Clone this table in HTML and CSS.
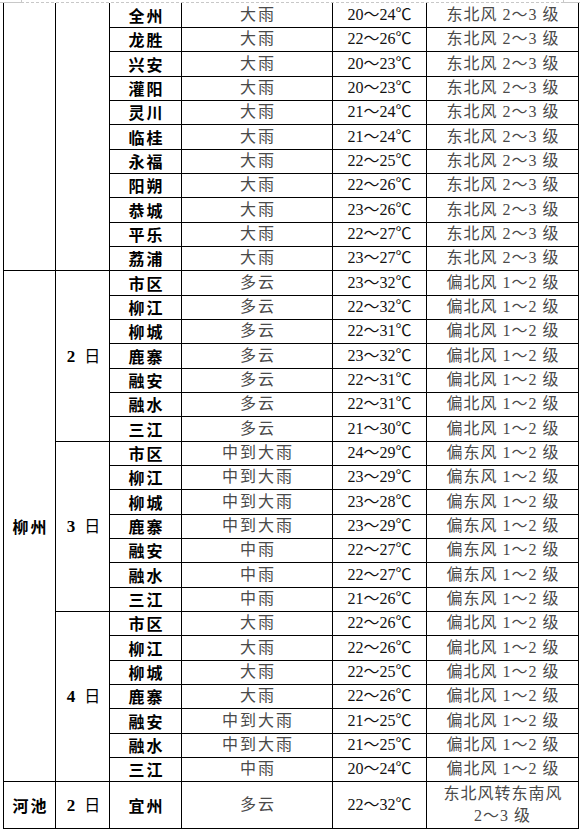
FILE: index.html
```html
<!DOCTYPE html>
<html lang="zh-CN">
<head>
<meta charset="utf-8">
<title>天气预报</title>
<link rel="stylesheet" href="styles.css">
</head>
<body>
<div class="cropline">
  <span class="seg-l"></span><span class="seg-m"></span><span class="seg-r"></span>
</div>
<table class="forecast">
  <colgroup>
    <col class="c-city"><col class="c-date"><col class="c-county"><col class="c-wx"><col class="c-temp"><col class="c-wind">
  </colgroup>
  <tbody>
    <tr class="first"><td class="city" rowspan="11"></td><td class="date" rowspan="11"></td><td class="county">全州</td><td class="wx">大雨</td><td class="temp">20～24℃</td><td class="wind">东北风 2～3 级</td></tr>
    <tr><td class="county">龙胜</td><td class="wx">大雨</td><td class="temp">22～26℃</td><td class="wind">东北风 2～3 级</td></tr>
    <tr><td class="county">兴安</td><td class="wx">大雨</td><td class="temp">20～23℃</td><td class="wind">东北风 2～3 级</td></tr>
    <tr><td class="county">灌阳</td><td class="wx">大雨</td><td class="temp">20～23℃</td><td class="wind">东北风 2～3 级</td></tr>
    <tr><td class="county">灵川</td><td class="wx">大雨</td><td class="temp">21～24℃</td><td class="wind">东北风 2～3 级</td></tr>
    <tr><td class="county">临桂</td><td class="wx">大雨</td><td class="temp">21～24℃</td><td class="wind">东北风 2～3 级</td></tr>
    <tr><td class="county">永福</td><td class="wx">大雨</td><td class="temp">22～25℃</td><td class="wind">东北风 2～3 级</td></tr>
    <tr><td class="county">阳朔</td><td class="wx">大雨</td><td class="temp">22～26℃</td><td class="wind">东北风 2～3 级</td></tr>
    <tr><td class="county">恭城</td><td class="wx">大雨</td><td class="temp">23～26℃</td><td class="wind">东北风 2～3 级</td></tr>
    <tr><td class="county">平乐</td><td class="wx">大雨</td><td class="temp">22～27℃</td><td class="wind">东北风 2～3 级</td></tr>
    <tr><td class="county">荔浦</td><td class="wx">大雨</td><td class="temp">23～27℃</td><td class="wind">东北风 2～3 级</td></tr>

    <tr><td class="city" rowspan="21">柳州</td><td class="date" rowspan="7"><b>2</b>日</td><td class="county">市区</td><td class="wx">多云</td><td class="temp">23～32℃</td><td class="wind">偏北风 1～2 级</td></tr>
    <tr><td class="county">柳江</td><td class="wx">多云</td><td class="temp">22～32℃</td><td class="wind">偏北风 1～2 级</td></tr>
    <tr><td class="county">柳城</td><td class="wx">多云</td><td class="temp">22～31℃</td><td class="wind">偏北风 1～2 级</td></tr>
    <tr><td class="county">鹿寨</td><td class="wx">多云</td><td class="temp">23～32℃</td><td class="wind">偏北风 1～2 级</td></tr>
    <tr><td class="county">融安</td><td class="wx">多云</td><td class="temp">22～31℃</td><td class="wind">偏北风 1～2 级</td></tr>
    <tr><td class="county">融水</td><td class="wx">多云</td><td class="temp">22～31℃</td><td class="wind">偏北风 1～2 级</td></tr>
    <tr><td class="county">三江</td><td class="wx">多云</td><td class="temp">21～30℃</td><td class="wind">偏北风 1～2 级</td></tr>

    <tr><td class="date" rowspan="7"><b>3</b>日</td><td class="county">市区</td><td class="wx">中到大雨</td><td class="temp">24～29℃</td><td class="wind">偏东风 1～2 级</td></tr>
    <tr><td class="county">柳江</td><td class="wx">中到大雨</td><td class="temp">23～29℃</td><td class="wind">偏东风 1～2 级</td></tr>
    <tr><td class="county">柳城</td><td class="wx">中到大雨</td><td class="temp">23～28℃</td><td class="wind">偏东风 1～2 级</td></tr>
    <tr><td class="county">鹿寨</td><td class="wx">中到大雨</td><td class="temp">23～29℃</td><td class="wind">偏东风 1～2 级</td></tr>
    <tr><td class="county">融安</td><td class="wx">中雨</td><td class="temp">22～27℃</td><td class="wind">偏东风 1～2 级</td></tr>
    <tr><td class="county">融水</td><td class="wx">中雨</td><td class="temp">22～27℃</td><td class="wind">偏东风 1～2 级</td></tr>
    <tr><td class="county">三江</td><td class="wx">中雨</td><td class="temp">21～26℃</td><td class="wind">偏东风 1～2 级</td></tr>

    <tr><td class="date" rowspan="7"><b>4</b>日</td><td class="county">市区</td><td class="wx">大雨</td><td class="temp">22～26℃</td><td class="wind">偏北风 1～2 级</td></tr>
    <tr><td class="county">柳江</td><td class="wx">大雨</td><td class="temp">22～26℃</td><td class="wind">偏北风 1～2 级</td></tr>
    <tr><td class="county">柳城</td><td class="wx">大雨</td><td class="temp">22～25℃</td><td class="wind">偏北风 1～2 级</td></tr>
    <tr><td class="county">鹿寨</td><td class="wx">大雨</td><td class="temp">22～26℃</td><td class="wind">偏北风 1～2 级</td></tr>
    <tr><td class="county">融安</td><td class="wx">中到大雨</td><td class="temp">21～25℃</td><td class="wind">偏北风 1～2 级</td></tr>
    <tr><td class="county">融水</td><td class="wx">中到大雨</td><td class="temp">21～25℃</td><td class="wind">偏北风 1～2 级</td></tr>
    <tr><td class="county">三江</td><td class="wx">中雨</td><td class="temp">20～24℃</td><td class="wind">偏北风 1～2 级</td></tr>

    <tr class="tall"><td class="city">河池</td><td class="date"><b>2</b>日</td><td class="county">宜州</td><td class="wx">多云</td><td class="temp">22～32℃</td><td class="wind">东北风转东南风<br>2～3 级</td></tr>
  </tbody>
</table>
</body>
</html>
```

FILE: styles.css
```css
html, body {
  margin: 0;
  padding: 0;
  background: #ffffff;
}

body {
  font-family: "Liberation Serif", "Noto Sans CJK SC", serif;
  color: #000;
}

.cropline {
  display: flex;
  height: 3px;
  width: 580px;
}

.cropline .seg-l {
  width: 21px;
  border-bottom: 1px solid #c8c8c8;
}

.cropline .seg-m {
  flex: 1;
  border-bottom: 1px dashed #c8c8c8;
  border-left: 1px solid #c8c8c8;
  border-right: 1px solid #c8c8c8;
}

.cropline .seg-r {
  width: 16px;
  border-bottom: 1px solid #c8c8c8;
}

.forecast {
  border-collapse: collapse;
  table-layout: fixed;
  width: 575px;
  margin-left: 3px;
  margin-top: 0;
}

.c-city { width: 52px; }
.c-date { width: 54px; }
.c-county { width: 72px; }
.c-wx { width: 151px; }
.c-temp { width: 94px; }
.c-wind { width: 152px; }

.forecast td {
  border: 1px solid #000;
  padding: 0;
  text-align: center;
  vertical-align: middle;
  font-size: 16px;
  line-height: 20px;
  white-space: nowrap;
}

.forecast tr {
  height: 24px;
}

.forecast tr:nth-child(3n) {
  height: 25px;
}

.forecast tr.first td {
  border-top: none;
}

.forecast tr.tall {
  height: 47px;
}

.forecast td.city,
.forecast td.county {
  font-family: "Noto Sans CJK SC", sans-serif;
  font-weight: 700;
  letter-spacing: 2px;
  text-indent: 2px;
}

.forecast td.date {
  font-family: "Noto Sans CJK SC", sans-serif;
  font-weight: 400;
  padding-left: 2px;
}

.forecast td.date b {
  font-family: "Liberation Serif", serif;
  font-weight: 700;
  font-size: 17px;
  margin-right: 9px;
}

.forecast td.wx,
.forecast td.wind {
  color: #4a4a4a;
  letter-spacing: 1px;
  text-indent: 1px;
  font-weight: 400;
}

.forecast td.wx {
  letter-spacing: 2px;
  text-indent: 2px;
}

.forecast td.temp {
  color: #111;
}

.forecast tr.tall td.wind {
  line-height: 22px;
}
```
